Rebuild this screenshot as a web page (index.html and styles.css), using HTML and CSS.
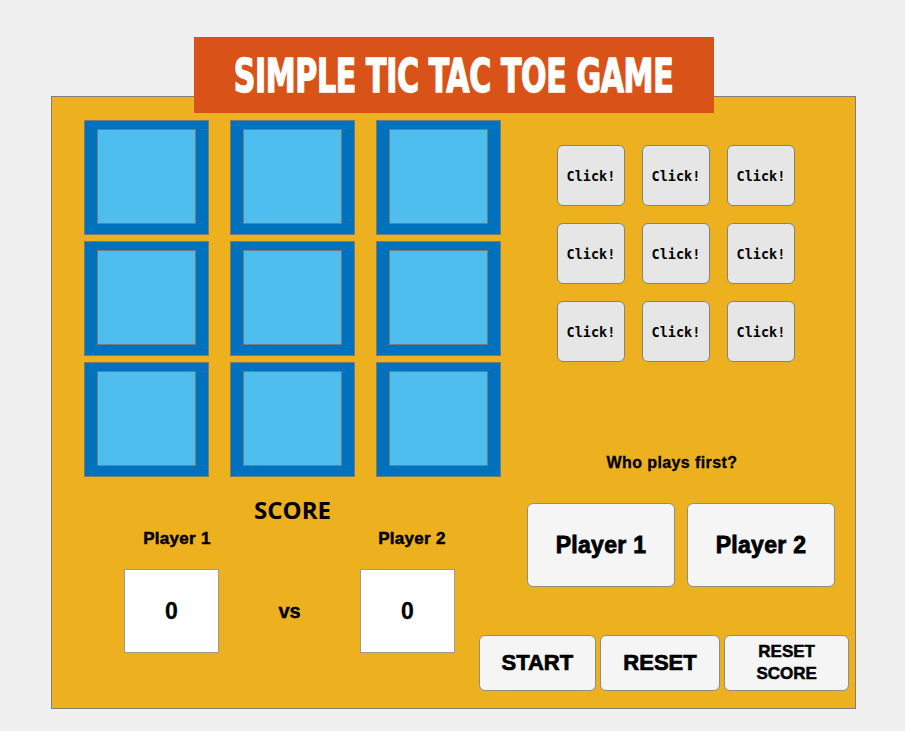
FILE: index.html
```html
<!DOCTYPE html>
<html>
<head>
<meta charset="utf-8">
<link rel="stylesheet" href="styles.css">
</head>
<body>
<div class="app">
  <div class="banner"><span class="banner-text">SIMPLE TIC TAC TOE GAME</span></div>
  <div class="panel">
    <div class="left">
      <div class="board">
        <div class="cell"><div class="cell-in"></div></div>
        <div class="cell"><div class="cell-in"></div></div>
        <div class="cell"><div class="cell-in"></div></div>
        <div class="cell"><div class="cell-in"></div></div>
        <div class="cell"><div class="cell-in"></div></div>
        <div class="cell"><div class="cell-in"></div></div>
        <div class="cell"><div class="cell-in"></div></div>
        <div class="cell"><div class="cell-in"></div></div>
        <div class="cell"><div class="cell-in"></div></div>
      </div>
      <div class="score-title">SCORE</div>
      <div class="score-row labels">
        <div class="plabel">Player 1</div>
        <div class="plabel">Player 2</div>
      </div>
      <div class="score-row boxes">
        <div class="sbox">0</div>
        <div class="vs">vs</div>
        <div class="sbox">0</div>
      </div>
    </div>
    <div class="right">
      <div class="clicks">
        <button class="click">Click!</button>
        <button class="click">Click!</button>
        <button class="click">Click!</button>
        <button class="click">Click!</button>
        <button class="click">Click!</button>
        <button class="click">Click!</button>
        <button class="click">Click!</button>
        <button class="click">Click!</button>
        <button class="click">Click!</button>
      </div>
      <div class="who">Who plays first?</div>
      <div class="players">
        <button class="pbtn">Player 1</button>
        <button class="pbtn">Player 2</button>
      </div>
      <div class="actions">
        <button class="abtn start">START</button>
        <button class="abtn reset">RESET</button>
        <button class="abtn rscore">RESET<br>SCORE</button>
      </div>
    </div>
  </div>
</div>
</body>
</html>
```

FILE: styles.css
```css
html, body {
  margin: 0;
  padding: 0;
  background: #f0f0f0;
}
.app {
  width: 805px;
  margin-left: 51px;
  padding-top: 37px;
  font-family: "Liberation Sans", Arial, sans-serif;
}
.banner {
  position: relative;
  z-index: 1;
  width: 520px;
  height: 76px;
  margin: 0 auto -17px auto;
  background: #d95319;
  display: flex;
  align-items: center;
  justify-content: center;
  overflow: hidden;
}
.banner-text {
  display: inline-block;
  font-family: "DejaVu Sans Condensed", "DejaVu Sans", sans-serif;
  font-weight: bold;
  font-size: 47px;
  color: #fff;
  white-space: nowrap;
  transform: scaleX(0.71);
  letter-spacing: -0.5px;
  -webkit-text-stroke: 1.4px #fff;
}
.panel {
  box-sizing: border-box;
  height: 613px;
  border: 1px solid #7f7f7f;
  background: #edb120;
  display: flex;
  padding: 23px 0 0 32px;
}
.left {
  width: 417px;
}
.board {
  display: grid;
  grid-template-columns: repeat(3, 125px);
  grid-auto-rows: 115px;
  column-gap: 21px;
  row-gap: 6px;
}
.cell {
  box-sizing: border-box;
  border: 1px solid #7a7a7a;
  background: #0072bd;
  padding: 8px 12px 10px 12px;
}
.cell-in {
  box-sizing: border-box;
  height: 100%;
  border: 1px solid #7a7a7a;
  background: #4dbeed;
}
.score-title {
  margin-top: 19px;
  text-align: center;
  font-family: "Open Sans", "DejaVu Sans", sans-serif;
  font-weight: bold;
  font-size: 24px;
  line-height: 28px;
  color: #000;
}
.score-row {
  display: flex;
}
.labels {
  margin-top: 3px;
  height: 24px;
  align-items: center;
}
.plabel {
  font-weight: bold;
  font-size: 17px;
  -webkit-text-stroke: 0.5px #000;
  letter-spacing: 0.3px;
  width: 118px;
  text-align: center;
}
.labels .plabel:first-child {
  margin-left: 34px;
}
.labels .plabel:last-child {
  margin-left: 117px;
}
.boxes {
  margin-top: 18px;
  align-items: center;
}
.sbox {
  box-sizing: border-box;
  width: 95px;
  height: 84px;
  background: #fff;
  border: 1px solid #9a9a9a;
  display: flex;
  align-items: center;
  justify-content: center;
  font-weight: bold;
  font-size: 23px;
  -webkit-text-stroke: 0.3px #000;
}
.boxes .sbox:first-child {
  margin-left: 40px;
}
.vs {
  width: 141px;
  text-align: center;
  font-weight: bold;
  font-size: 20px;
  -webkit-text-stroke: 0.4px #000;
}
.right {
  width: 344px;
  margin-left: 4px;
  display: flex;
  flex-direction: column;
}
button {
  font-family: inherit;
  color: #000;
  cursor: pointer;
  padding: 0;
}
.clicks {
  margin-top: 25px;
  margin-left: 52px;
  display: grid;
  grid-template-columns: 68px 68px 68px;
  grid-auto-rows: 61px;
  column-gap: 17px;
  row-gap: 17px;
}
.click {
  box-sizing: border-box;
  background: #e6e6e6;
  border: 1px solid #828282;
  border-radius: 6px;
  font-family: "DejaVu Sans Mono", "Liberation Mono", monospace;
  font-weight: bold;
  font-size: 13.5px;
}
.who {
  margin-top: 91px;
  padding-right: 10px;
  text-align: center;
  font-weight: bold;
  font-size: 16px;
  letter-spacing: 0.4px;
  -webkit-text-stroke: 0.3px #000;
  line-height: 20px;
}
.players {
  margin-top: 30px;
  margin-left: 22px;
  display: flex;
  gap: 12px;
}
.pbtn {
  box-sizing: border-box;
  width: 148px;
  height: 84px;
  background: #f5f5f5;
  border: 1px solid #8c8c8c;
  border-radius: 6px;
  font-weight: bold;
  font-size: 23px;
  letter-spacing: 0.3px;
  -webkit-text-stroke: 0.8px #000;
}
.actions {
  margin-top: 48px;
  margin-left: -26px;
  display: flex;
  gap: 4px;
}
.abtn {
  box-sizing: border-box;
  height: 56px;
  background: #f5f5f5;
  border: 1px solid #8c8c8c;
  border-radius: 6px;
  font-weight: bold;
  font-size: 22px;
  -webkit-text-stroke: 0.7px #000;
}
.start { width: 117px; }
.reset { width: 121px; }
.rscore {
  width: 125px;
  font-size: 17px;
  line-height: 22px;
  -webkit-text-stroke: 0.5px #000;
}
```
